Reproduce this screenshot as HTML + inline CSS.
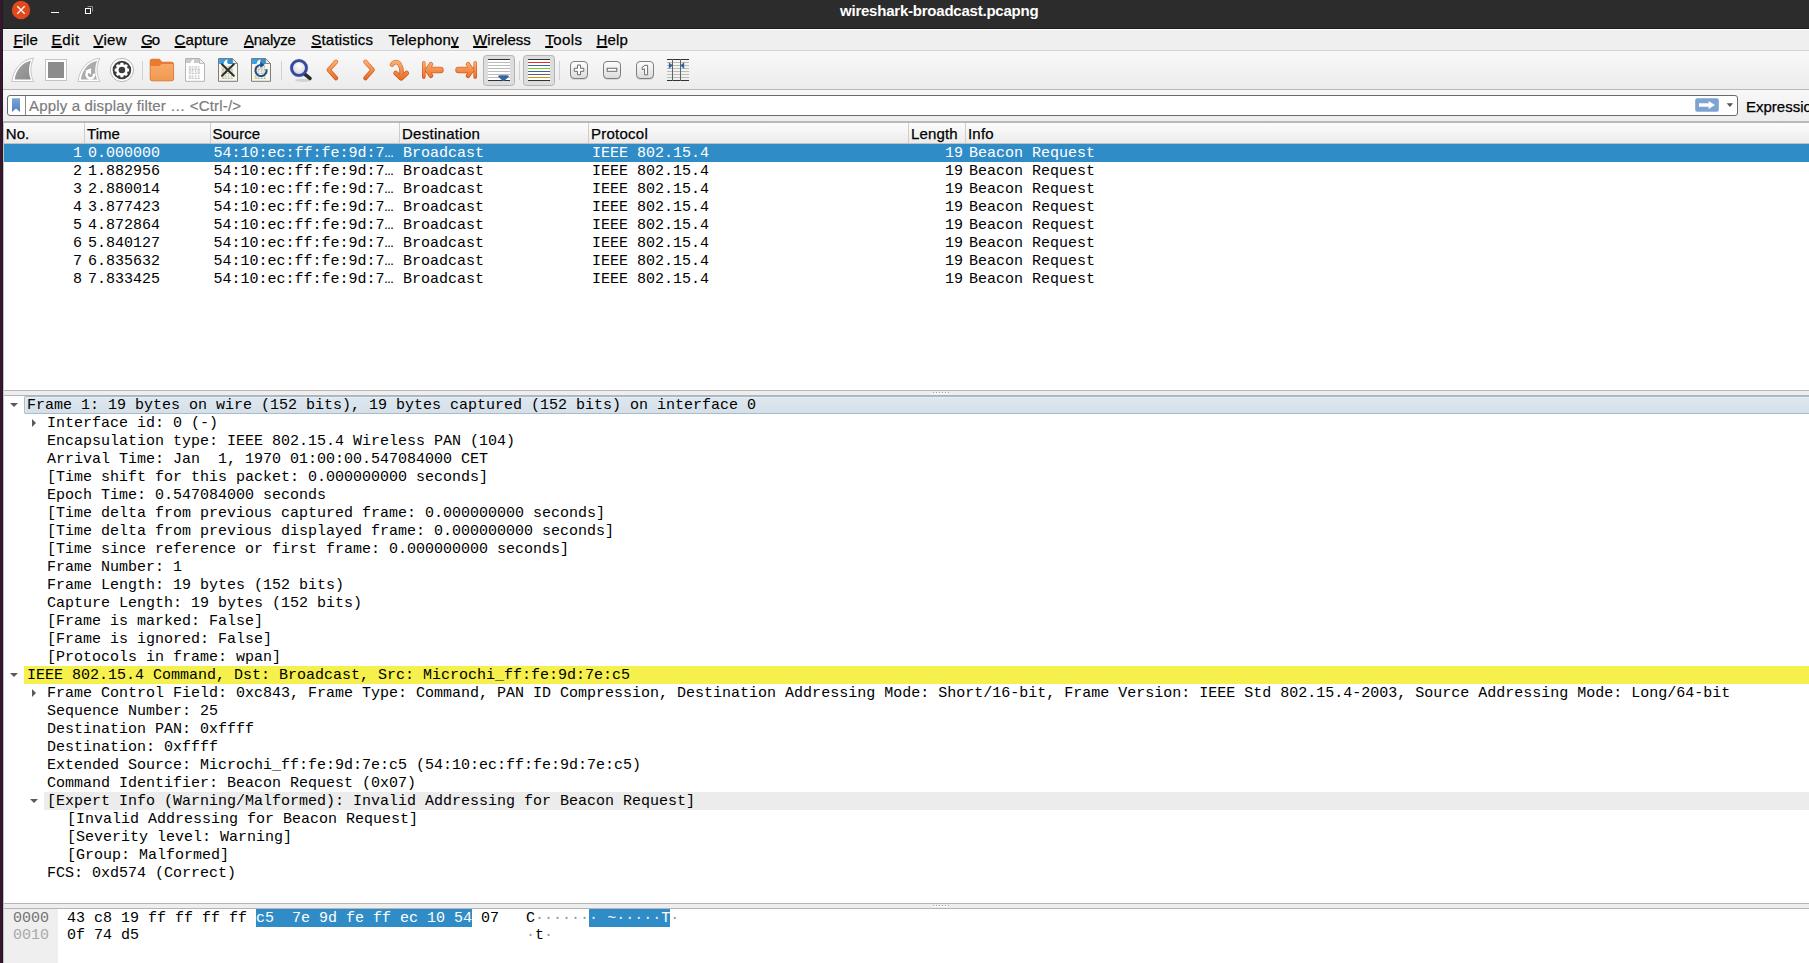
<!DOCTYPE html>
<html lang="en">
<head>
<meta charset="utf-8">
<title>wireshark-broadcast.pcapng</title>
<style>
html,body{margin:0;padding:0;}
body{width:1809px;height:963px;overflow:hidden;position:relative;background:#fff;
 font-family:"Liberation Sans","DejaVu Sans",sans-serif;font-size:15px;color:#000;}
.abs{position:absolute;}
#strip{left:0;top:0;width:2px;height:963px;background:#391530;border-right:1px solid #1d1d1d;}
#title{left:0;top:0;width:1809px;height:28px;background:#2c2c2c;border-bottom:1px solid #1c1c1c;}
#title span{position:absolute;top:1px;color:#fff;font-weight:bold;font-size:15px;line-height:20px;white-space:nowrap;}
#menubar{left:3px;top:29px;width:1806px;height:20px;background:#efefef;border-top:1px solid #fdfdfd;border-bottom:1px solid #d4d4d4;}
#menubar span{-webkit-text-stroke:0.25px #000;position:absolute;top:0px;line-height:20px;font-size:15px;color:#000;white-space:nowrap;margin-left:-3px;}
#menubar u{text-decoration-skip-ink:none;text-decoration:underline;text-decoration-thickness:2px;text-underline-offset:1px;}
#toolbar{left:3px;top:51px;width:1806px;height:38px;background:linear-gradient(#f9f9f9,#ececec);border-bottom:1px solid #b9b9b9;}
#filterbar{left:3px;top:90px;width:1806px;height:31px;background:linear-gradient(#f8f8f8,#f6f6f6 20%,#efefef 80%,#eeeeee);}
#finput{left:7px;top:95px;width:1729px;height:19px;background:#fff;border:1px solid #6a6a6a;border-radius:3px;}
#finput .ph{-webkit-text-stroke:0.2px #7c7c7c;position:absolute;left:21px;top:0;line-height:20px;font-size:15px;color:#7c7c7c;white-space:nowrap;}
#finput .div{position:absolute;left:17px;top:0;width:1px;height:19px;background:#8a8a8a;}
#expr{-webkit-text-stroke:0.25px #000;left:1746px;top:97px;font-size:15px;line-height:20px;white-space:nowrap;}
#fline{left:3px;top:121px;width:1806px;height:2px;background:#b9b9b9;}
#phead{left:3px;top:123px;width:1806px;height:20px;background:linear-gradient(#fcfcfc,#f5f5f5 45%,#ebebeb);border-bottom:1px solid #c4c2c0;}
#phead span{-webkit-text-stroke:0.25px #000;position:absolute;top:1px;line-height:20px;font-size:15px;white-space:nowrap;}
#phead i{position:absolute;top:0;width:1px;height:20px;background:#cdcdcd;}
.mono{font-family:"Liberation Mono","DejaVu Sans Mono",monospace;font-size:15px;white-space:pre;}
.prow{position:absolute;left:3px;width:1806px;height:18px;line-height:18px;}
.prow span{position:absolute;top:1px;}
.prow.sel{background:#308cc6;color:#fff;}
.split{left:3px;width:1806px;height:6px;background:#eeeeee;border-top:1px solid #b5b5b5;border-bottom:1px solid #b5b5b5;box-sizing:border-box;}
.split b{position:absolute;left:930px;top:1px;width:16px;height:1px;background:repeating-linear-gradient(90deg,#a2a2a2 0 1px,transparent 1px 3px);box-shadow:0 1px 0 #fbfbfb;}
#details{left:3px;top:396px;width:1806px;height:507px;overflow:hidden;}
.drow{position:absolute;left:0;width:1806px;height:18px;line-height:18px;}
.drow span{position:absolute;top:1px;}
.drow .ar{position:absolute;}
.drow .bg{position:absolute;top:0;right:0;height:18px;}
.bg.selrow{background:linear-gradient(#dee7ef,#d5dfe8);box-shadow:inset 1px 1px 0 #e6eef5;border:1px solid #a8bccf;border-right:0;box-sizing:border-box;border-radius:2px 0 0 2px;}
.bg.yel{background:#f5f04c;}
.bg.gry{background:#ececec;}
#bytes{left:3px;top:909px;width:1806px;height:54px;background:#fff;}
#bytes .off{position:absolute;left:0;top:0;width:55px;height:54px;background:#efefef;}
#bytes .hl{position:absolute;height:18px;background:#308cc6;}
.brow{position:absolute;left:0;width:1806px;height:17px;line-height:18px;}
.brow span{position:absolute;top:1px;}
.brow em{font-style:normal;color:#fff;}
.brow s{text-decoration:none;color:#9a9a9a;}
.brow em s{color:#e4eef7;}
.o1{color:#737373;}
.o2{color:#a9a9a9;}
#edge{left:3px;top:123px;width:1px;height:840px;background:#c3c3c3;}

</style>
</head>
<body>
<div id="title" class="abs"><span id="ttl" style="left:840px;letter-spacing:-0.225px;">wireshark-broadcast.pcapng</span></div>
<div id="strip" class="abs"></div>
<svg class="abs" style="left:0;top:0" width="110" height="28" viewBox="0 0 110 28">
<circle cx="21" cy="10" r="9.2" fill="#e0491c"/>
<path d="M17.3 6.3 L24.7 13.7 M24.7 6.3 L17.3 13.7" stroke="#fff" stroke-width="1.3" fill="none"/>
<rect x="51" y="12" width="8" height="1" fill="#fff"/>
<rect x="85.5" y="8.5" width="5" height="5" fill="none" stroke="#fff" stroke-width="1"/>
<path d="M87.5 6.5 H92.5 V11.5" fill="none" stroke="#8c8c8c" stroke-width="1"/>
</svg>
<div id="menubar" class="abs"><span id="m0" style="left:13.5px;letter-spacing:0.038px;"><u>F</u>ile</span><span id="m1" style="left:51.5px;letter-spacing:0.614px;"><u>E</u>dit</span><span id="m2" style="left:93.4px;letter-spacing:0.317px;"><u>V</u>iew</span><span id="m3" style="left:141.2px;letter-spacing:-1.216px;"><u>G</u>o</span><span id="m4" style="left:174.6px;letter-spacing:0.068px;"><u>C</u>apture</span><span id="m5" style="left:243.9px;letter-spacing:-0.229px;"><u>A</u>nalyze</span><span id="m6" style="left:311.3px;letter-spacing:0.185px;"><u>S</u>tatistics</span><span id="m7" style="left:388.6px;letter-spacing:0.201px;">Telephon<u>y</u></span><span id="m8" style="left:473.1px;letter-spacing:0.024px;"><u>W</u>ireless</span><span id="m9" style="left:545.2px;letter-spacing:0.442px;"><u>T</u>ools</span><span id="m10" style="left:596.5px;letter-spacing:0.142px;"><u>H</u>elp</span></div>
<div id="toolbar" class="abs"></div>
<svg id="tbicons" class="abs" style="left:0;top:51px" width="700" height="38" viewBox="0 51 700 38">
<defs>
<linearGradient id="gFin" x1="0" y1="0" x2="1" y2="1"><stop offset="0" stop-color="#a6a6a6"/><stop offset="1" stop-color="#8a8a8a"/></linearGradient>
<linearGradient id="gOr" gradientUnits="userSpaceOnUse" x1="0" y1="60" x2="0" y2="80"><stop offset="0" stop-color="#f8b67a"/><stop offset="1" stop-color="#ec6a22"/></linearGradient>
<linearGradient id="gOrD" gradientUnits="userSpaceOnUse" x1="0" y1="60" x2="0" y2="80"><stop offset="0" stop-color="#e27c3a"/><stop offset="1" stop-color="#c94a14"/></linearGradient>
<linearGradient id="gFold" x1="0" y1="0" x2="0" y2="1"><stop offset="0" stop-color="#f6a968"/><stop offset="1" stop-color="#f19a50"/></linearGradient>
<linearGradient id="gBtn" x1="0" y1="0" x2="0" y2="1"><stop offset="0" stop-color="#ffffff"/><stop offset="1" stop-color="#dadada"/></linearGradient>
<linearGradient id="gHdr" x1="0" y1="0" x2="1" y2="0"><stop offset="0" stop-color="#3fa4e6"/><stop offset="1" stop-color="#1f8ad6"/></linearGradient>
<radialGradient id="gLens" cx="0.5" cy="0.35" r="0.7"><stop offset="0" stop-color="#ffffff"/><stop offset="1" stop-color="#cfcfcf"/></radialGradient>
</defs>
<!-- 1 shark fin (start capture, disabled) -->
<path d="M33.7 58.1 C21 59.6 13.2 69.5 11.9 81.5 H33.7 C30.2 74.5 29.6 66.5 33.7 58.1Z" fill="#fff" stroke="#c6c6c6" stroke-width="1"/>
<path d="M31 60.7 C22 62.4 16 70 14.7 79.5 H30.9 C28.5 73.5 28.3 67 31 60.7Z" fill="url(#gFin)"/>
<!-- 2 stop -->
<rect x="45.5" y="59.5" width="21" height="21" fill="#fff" stroke="#c4c4c4"/>
<rect x="48" y="62" width="16" height="16" fill="#8c8c8c"/>
<!-- 3 restart fin -->
<path d="M99.9 58.1 C87.2 59.6 79.4 69.5 78.1 81.5 H99.9 C96.4 74.5 95.8 66.5 99.9 58.1Z" fill="#fff" stroke="#c6c6c6" stroke-width="1"/>
<path d="M97.2 60.7 C88.2 62.4 82.2 70 80.9 79.5 H97.1 C94.7 73.5 94.5 67 97.2 60.7Z" fill="#ababab"/>
<path d="M94 73.6 A3.8 3.8 0 1 1 88.7 71.2" fill="none" stroke="#fff" stroke-width="2.5"/>
<path d="M85.1 70.8 L91.1 68.2 L90.9 74.4 Z" fill="#fff"/>
<!-- 4 gear / options -->
<circle cx="121.9" cy="70" r="11.6" fill="#fff" stroke="#b5b5b5" stroke-width="1"/>
<circle cx="121.9" cy="70" r="9.3" fill="#3b3b3b"/>
<g fill="#fff" transform="translate(121.9 70)">
<circle r="5.9"/>
<g id="teeth"><rect x="-1.5" y="-7.2" width="3" height="14.4" rx="0.5"/><rect x="-7.2" y="-1.5" width="14.4" height="3" rx="0.5"/></g>
<g transform="rotate(45)"><rect x="-1.5" y="-7.2" width="3" height="14.4" rx="0.5"/><rect x="-7.2" y="-1.5" width="14.4" height="3" rx="0.5"/></g>
</g>
<circle cx="121.9" cy="70" r="3.3" fill="#3b3b3b"/>
<!-- sep -->
<rect x="142" y="61" width="1" height="19" fill="#d2d2d2"/>
<!-- 5 folder -->
<path d="M152 59.2 H158.6 Q160 59.2 160.7 60.5 L161.4 62.2 H171.6 Q173.6 62.2 173.6 64.2 V78.8 Q173.6 80.8 171.6 80.8 H152.2 Q150.2 80.8 150.2 78.8 V61 Q150.2 59.2 152 59.2Z" fill="#ed7a2c" stroke="#cf6a2c" stroke-width="0.8"/>
<path d="M150.6 66 H158.6 Q159.6 66 160.2 65.2 L160.8 64.4 Q161.3 63.9 162.2 63.9 H173.2 V78.8 Q173.2 80.4 171.6 80.4 H152.2 Q150.6 80.4 150.6 78.8Z" fill="url(#gFold)"/>
<!-- 6 file (disabled save) -->
<path d="M185.5 58.5 H199.5 L204.5 63.5 V81.3 H185.5Z" fill="#fff" stroke="#b4b4b4"/>
<path d="M186 59 H199.3 L203 62.8 V63 H186Z" fill="#c9c9c9"/>
<path d="M199.5 58.5 V63.5 H204.5Z" fill="#ececec" stroke="#b4b4b4" stroke-width="0.8"/>
<path d="M190.5 63 Q191 60 194 59 V63Z" fill="#fff"/>
<g font-family="Liberation Mono, monospace" font-size="4.6" fill="#a6a6a6" letter-spacing="0.2"><text x="188.4" y="69.8">0101</text><text x="188.4" y="74.3">0110</text><text x="188.4" y="78.8">0111</text></g>
<!-- 7 close file -->
<path d="M218.5 58.5 H232.5 L237.5 63.5 V81.3 H218.5Z" fill="#f8f8e8" stroke="#7c7c7c"/>
<path d="M219 59 H232.3 L236 62.8 V64 H219Z" fill="url(#gHdr)"/>
<path d="M232.5 58.5 V63.5 H237.5Z" fill="#ececec" stroke="#7c7c7c" stroke-width="0.8"/>
<path d="M223.5 64 Q224 60.5 227.5 59.2 Q226.5 62 228 64Z" fill="#fff"/>
<g font-family="Liberation Mono, monospace" font-size="4.6" fill="#9a9a8e" letter-spacing="0.2"><text x="221.4" y="69.8">0101</text><text x="221.4" y="74.3">0110</text><text x="221.4" y="78.8">0111</text></g>
<path d="M222 64.3 L233.8 75.7 M233.8 64.3 L222 75.7" stroke="#303030" stroke-width="2.05" stroke-linecap="round"/>
<!-- 8 reload -->
<path d="M251.5 58.5 H265.5 L270.5 63.5 V81.3 H251.5Z" fill="#f8f8e8" stroke="#7c7c7c"/>
<path d="M252 59 H265.3 L269 62.8 V64 H252Z" fill="url(#gHdr)"/>
<path d="M265.5 58.5 V63.5 H270.5Z" fill="#ececec" stroke="#7c7c7c" stroke-width="0.8"/>
<path d="M256.5 64 Q257 60.5 260.5 59.2 Q259.5 62 261 64Z" fill="#fff"/>
<g font-family="Liberation Mono, monospace" font-size="4.6" fill="#9a9a8e" letter-spacing="0.2"><text x="254.4" y="69.8">0101</text><text x="254.4" y="74.3">0110</text><text x="254.4" y="78.8">0111</text></g>
<path d="M266.5 69.2 A5.6 5.6 0 1 1 260.6 64.9" fill="none" stroke="#1f4b92" stroke-width="1.95"/>
<path d="M260.2 62 L264.9 64.9 L260.2 67.8Z" fill="#1f4b92"/>
<!-- sep -->
<rect x="281" y="61" width="1" height="19" fill="#d2d2d2"/>
<!-- 9 find -->
<ellipse cx="303" cy="80.3" rx="8" ry="1.6" fill="#000" opacity="0.12"/>
<path d="M304.4 73.8 L310 78.4" stroke="#2a2a2a" stroke-width="3.6" stroke-linecap="round"/>
<circle cx="299" cy="68" r="7.4" fill="url(#gLens)" stroke="#344aa2" stroke-width="2.8"/>
<circle cx="299" cy="68" r="8.8" fill="none" stroke="#2a3f8f" stroke-width="0.5" opacity="0.7"/>
<!-- 10,11 chevrons -->
<path d="M336 61.7 L328.7 69.9 L336 78.2" fill="none" stroke="url(#gOrD)" stroke-width="4.3" stroke-linecap="round" stroke-linejoin="round"/>
<path d="M336 61.7 L328.7 69.9 L336 78.2" fill="none" stroke="url(#gOr)" stroke-width="2.8" stroke-linecap="round" stroke-linejoin="round"/>
<path d="M365.4 61.7 L372.7 69.9 L365.4 78.2" fill="none" stroke="url(#gOrD)" stroke-width="4.3" stroke-linecap="round" stroke-linejoin="round"/>
<path d="M365.4 61.7 L372.7 69.9 L365.4 78.2" fill="none" stroke="url(#gOr)" stroke-width="2.8" stroke-linecap="round" stroke-linejoin="round"/>
<!-- 12 go to packet -->
<g fill="none" stroke-linecap="round" stroke-linejoin="round">
<path d="M392 64.6 C394.8 60 402.8 60.6 401.4 76.6" stroke="url(#gOrD)" stroke-width="4.6"/>
<path d="M395.6 73 L401.2 78.4 L406.8 73" stroke="url(#gOrD)" stroke-width="4.6"/>
<path d="M392 64.6 C394.8 60 402.8 60.6 401.4 76.6" stroke="url(#gOr)" stroke-width="3.1"/>
<path d="M395.6 73 L401.2 78.4 L406.8 73" stroke="url(#gOr)" stroke-width="3.1"/>
</g>
<!-- 13 first -->
<g fill="none" stroke-linecap="round" stroke-linejoin="round">
<path d="M423.8 62.9 V77.1" stroke="url(#gOrD)" stroke-width="3.6"/>
<path d="M428 70 H440.5" stroke="url(#gOrD)" stroke-width="6.4"/>
<path d="M431 64.3 L427 70 L431 75.7" stroke="url(#gOrD)" stroke-width="4.6"/>
<path d="M423.8 62.9 V77.1" stroke="url(#gOr)" stroke-width="2.1"/>
<path d="M428 70 H440.5" stroke="url(#gOr)" stroke-width="4.9"/>
<path d="M431 64.3 L427 70 L431 75.7" stroke="url(#gOr)" stroke-width="3.1"/>
<!-- 14 last -->
<path d="M475.2 62.9 V77.1" stroke="url(#gOrD)" stroke-width="3.6"/>
<path d="M471 70 H458.5" stroke="url(#gOrD)" stroke-width="6.4"/>
<path d="M468 64.3 L472 70 L468 75.7" stroke="url(#gOrD)" stroke-width="4.6"/>
<path d="M475.2 62.9 V77.1" stroke="url(#gOr)" stroke-width="2.1"/>
<path d="M471 70 H458.5" stroke="url(#gOr)" stroke-width="4.9"/>
<path d="M468 64.3 L472 70 L468 75.7" stroke="url(#gOr)" stroke-width="3.1"/>
</g>
<!-- 15 autoscroll (checked) -->
<rect x="483.5" y="55.5" width="31" height="30" rx="3" fill="#dddddd" stroke="#b3b3b3"/>
<rect x="488" y="59" width="22" height="22" fill="#fff"/>
<g fill="#babdb6"><rect x="488" y="62" width="22" height="1"/><rect x="488" y="65" width="22" height="1"/><rect x="488" y="68" width="22" height="1"/><rect x="488" y="71" width="22" height="1"/><rect x="488" y="74" width="22" height="1"/><rect x="488" y="77" width="22" height="1"/></g>
<rect x="488" y="59" width="22" height="1" fill="#2e3436"/><rect x="488" y="80" width="22" height="1" fill="#2e3436"/>
<path d="M498 76.4 Q498.6 75.2 500 75.2 H507 Q508.6 75.2 509 76.4 L504.2 80.9 H502.8Z" fill="#3465a4"/>
<!-- sep -->
<rect x="519" y="61" width="1" height="19" fill="#d2d2d2"/>
<!-- 16 colorize (checked) -->
<rect x="523.5" y="55.5" width="31" height="30" rx="3" fill="#dddddd" stroke="#b3b3b3"/>
<rect x="528" y="59" width="22" height="22" fill="#fff"/>
<rect x="528" y="59" width="22" height="1" fill="#2e3436"/>
<rect x="528" y="62" width="22" height="1" fill="#ef2929"/>
<rect x="528" y="65" width="22" height="1" fill="#3465a4"/>
<rect x="528" y="68" width="22" height="1" fill="#73d216"/>
<rect x="528" y="71" width="22" height="1" fill="#3465a4"/>
<rect x="528" y="74" width="22" height="1" fill="#75507b"/>
<rect x="528" y="77" width="22" height="1" fill="#c4a000"/>
<rect x="528" y="80" width="22" height="1" fill="#2e3436"/>
<!-- sep -->
<rect x="559" y="61" width="1" height="19" fill="#d2d2d2"/>
<!-- 17-19 zoom buttons -->
<g>
<rect x="570.5" y="62.4" width="17" height="17" rx="3.6" fill="#000" opacity="0.2"/>
<rect x="570.5" y="61.5" width="17" height="17" rx="3.6" fill="url(#gBtn)" stroke="#7e7e7e"/>
<path d="M577.5 65 H580.5 V68.3 H583.8 V71.3 H580.5 V74.7 H577.5 V71.3 H574.2 V68.3 H577.5Z" fill="#fff" stroke="#6c6c6c" stroke-width="1"/>
<rect x="603.5" y="62.4" width="17" height="17" rx="3.6" fill="#000" opacity="0.2"/>
<rect x="603.5" y="61.5" width="17" height="17" rx="3.6" fill="url(#gBtn)" stroke="#7e7e7e"/>
<rect x="607.2" y="68.3" width="9.6" height="3" fill="#fff" stroke="#6c6c6c" stroke-width="1"/>
<rect x="636.5" y="62.4" width="17" height="17" rx="3.6" fill="#000" opacity="0.2"/>
<rect x="636.5" y="61.5" width="17" height="17" rx="3.6" fill="url(#gBtn)" stroke="#7e7e7e"/>
<path d="M645 65.3 H647.6 V74.8 H644.6 V68.8 L642.2 69.6 V67.2 Z" fill="#fff" stroke="#6c6c6c" stroke-width="1"/>
</g>
<!-- 20 resize columns -->
<g fill="#babdb6"><rect x="667" y="62" width="22" height="1"/><rect x="667" y="65" width="22" height="1"/><rect x="667" y="68" width="22" height="1"/><rect x="667" y="71" width="22" height="1"/><rect x="667" y="74" width="22" height="1"/><rect x="667" y="77" width="22" height="1"/></g>
<rect x="667" y="59" width="22" height="1" fill="#2e3436"/><rect x="667" y="80" width="22" height="1" fill="#2e3436"/>
<rect x="672" y="59" width="1" height="22" fill="#60625e"/><rect x="680" y="59" width="1" height="22" fill="#60625e"/>
<path d="M668.8 62.2 L672.9 65.5 L668.8 68.8Z" fill="#3465a4"/><path d="M684.2 62.2 L680.1 65.5 L684.2 68.8Z" fill="#3465a4"/>
</svg>
<div id="filterbar" class="abs"></div>
<div id="finput" class="abs"><div class="div"></div><span id="ph" class="ph" style="letter-spacing:0.164px;">Apply a display filter … &lt;Ctrl-/&gt;</span></div>
<svg class="abs" style="left:8px;top:96px" width="18" height="20" viewBox="0 0 18 20">
<defs><linearGradient id="bk" x1="0" y1="0" x2="0" y2="1"><stop offset="0" stop-color="#7fa6d6"/><stop offset="1" stop-color="#4f7fbf"/></linearGradient></defs>
<path d="M4 2.2 H12 V16 L8 12.6 L4 16 Z" fill="url(#bk)"/></svg>
<svg class="abs" style="left:1690px;top:96px" width="48" height="20" viewBox="0 0 48 20">
<rect x="5.2" y="2.2" width="23.6" height="13.6" rx="2" fill="#7da3d3"/>
<path d="M9 7.3 H18.6 V4.9 L25 9 L18.6 13.1 V10.7 H9 Z" fill="#fff"/>
<path d="M36.7 7.2 H43.1 L39.9 10.9 Z" fill="#555"/>
</svg>
<span id="expr" class="abs" style="">Expression…</span>
<div id="fline" class="abs"></div>
<div id="phead" class="abs"><span id="h0" style="left:2.8px;">No.</span><i style="left:81px"></i><span id="h1" style="left:84.1px;">Time</span><i style="left:207px"></i><span id="h2" style="left:209.5px;">Source</span><i style="left:396px"></i><span id="h3" style="left:398.9px;letter-spacing:0.295px;">Destination</span><i style="left:585px"></i><span id="h4" style="left:587.9px;letter-spacing:0.267px;">Protocol</span><i style="left:905px"></i><span id="h5" style="left:907.9px;letter-spacing:0.162px;">Length</span><i style="left:962px"></i><span id="h6" style="left:964.9px;letter-spacing:0.256px;">Info</span></div>
<div class="prow mono sel" style="top:144px"><span style="right:1727px">1</span><span style="left:85px">0.000000</span><span style="left:210.5px">54:10:ec:ff:fe:9d:7…</span><span style="left:400px">Broadcast</span><span style="left:589px">IEEE 802.15.4</span><span style="right:846px">19</span><span style="left:966px">Beacon Request</span></div>
<div class="prow mono" style="top:162px"><span style="right:1727px">2</span><span style="left:85px">1.882956</span><span style="left:210.5px">54:10:ec:ff:fe:9d:7…</span><span style="left:400px">Broadcast</span><span style="left:589px">IEEE 802.15.4</span><span style="right:846px">19</span><span style="left:966px">Beacon Request</span></div>
<div class="prow mono" style="top:180px"><span style="right:1727px">3</span><span style="left:85px">2.880014</span><span style="left:210.5px">54:10:ec:ff:fe:9d:7…</span><span style="left:400px">Broadcast</span><span style="left:589px">IEEE 802.15.4</span><span style="right:846px">19</span><span style="left:966px">Beacon Request</span></div>
<div class="prow mono" style="top:198px"><span style="right:1727px">4</span><span style="left:85px">3.877423</span><span style="left:210.5px">54:10:ec:ff:fe:9d:7…</span><span style="left:400px">Broadcast</span><span style="left:589px">IEEE 802.15.4</span><span style="right:846px">19</span><span style="left:966px">Beacon Request</span></div>
<div class="prow mono" style="top:216px"><span style="right:1727px">5</span><span style="left:85px">4.872864</span><span style="left:210.5px">54:10:ec:ff:fe:9d:7…</span><span style="left:400px">Broadcast</span><span style="left:589px">IEEE 802.15.4</span><span style="right:846px">19</span><span style="left:966px">Beacon Request</span></div>
<div class="prow mono" style="top:234px"><span style="right:1727px">6</span><span style="left:85px">5.840127</span><span style="left:210.5px">54:10:ec:ff:fe:9d:7…</span><span style="left:400px">Broadcast</span><span style="left:589px">IEEE 802.15.4</span><span style="right:846px">19</span><span style="left:966px">Beacon Request</span></div>
<div class="prow mono" style="top:252px"><span style="right:1727px">7</span><span style="left:85px">6.835632</span><span style="left:210.5px">54:10:ec:ff:fe:9d:7…</span><span style="left:400px">Broadcast</span><span style="left:589px">IEEE 802.15.4</span><span style="right:846px">19</span><span style="left:966px">Beacon Request</span></div>
<div class="prow mono" style="top:270px"><span style="right:1727px">8</span><span style="left:85px">7.833425</span><span style="left:210.5px">54:10:ec:ff:fe:9d:7…</span><span style="left:400px">Broadcast</span><span style="left:589px">IEEE 802.15.4</span><span style="right:846px">19</span><span style="left:966px">Beacon Request</span></div>
<div class="split abs" style="top:390px"><b></b></div>
<div id="details" class="abs mono">
<div class="drow" style="top:0px"><div class="bg selrow" style="left:21px"></div><svg class="ar" style="left:7px;top:7px" width="8" height="4" viewBox="0 0 8 4"><path d="M0 0H8L4 4Z" fill="#5a5a5a"/></svg><span style="left:24px">Frame 1: 19 bytes on wire (152 bits), 19 bytes captured (152 bits) on interface 0</span></div>
<div class="drow" style="top:18px"><svg class="ar" style="left:29px;top:5px" width="4" height="8" viewBox="0 0 4 8"><path d="M0 0V8L4 4Z" fill="#5a5a5a"/></svg><span style="left:44px">Interface id: 0 (-)</span></div>
<div class="drow" style="top:36px"><span style="left:44px">Encapsulation type: IEEE 802.15.4 Wireless PAN (104)</span></div>
<div class="drow" style="top:54px"><span style="left:44px">Arrival Time: Jan  1, 1970 01:00:00.547084000 CET</span></div>
<div class="drow" style="top:72px"><span style="left:44px">[Time shift for this packet: 0.000000000 seconds]</span></div>
<div class="drow" style="top:90px"><span style="left:44px">Epoch Time: 0.547084000 seconds</span></div>
<div class="drow" style="top:108px"><span style="left:44px">[Time delta from previous captured frame: 0.000000000 seconds]</span></div>
<div class="drow" style="top:126px"><span style="left:44px">[Time delta from previous displayed frame: 0.000000000 seconds]</span></div>
<div class="drow" style="top:144px"><span style="left:44px">[Time since reference or first frame: 0.000000000 seconds]</span></div>
<div class="drow" style="top:162px"><span style="left:44px">Frame Number: 1</span></div>
<div class="drow" style="top:180px"><span style="left:44px">Frame Length: 19 bytes (152 bits)</span></div>
<div class="drow" style="top:198px"><span style="left:44px">Capture Length: 19 bytes (152 bits)</span></div>
<div class="drow" style="top:216px"><span style="left:44px">[Frame is marked: False]</span></div>
<div class="drow" style="top:234px"><span style="left:44px">[Frame is ignored: False]</span></div>
<div class="drow" style="top:252px"><span style="left:44px">[Protocols in frame: wpan]</span></div>
<div class="drow" style="top:270px"><div class="bg yel" style="left:21px"></div><svg class="ar" style="left:7px;top:7px" width="8" height="4" viewBox="0 0 8 4"><path d="M0 0H8L4 4Z" fill="#5a5a5a"/></svg><span style="left:24px">IEEE 802.15.4 Command, Dst: Broadcast, Src: Microchi_ff:fe:9d:7e:c5</span></div>
<div class="drow" style="top:288px"><svg class="ar" style="left:29px;top:5px" width="4" height="8" viewBox="0 0 4 8"><path d="M0 0V8L4 4Z" fill="#5a5a5a"/></svg><span style="left:44px">Frame Control Field: 0xc843, Frame Type: Command, PAN ID Compression, Destination Addressing Mode: Short/16-bit, Frame Version: IEEE Std 802.15.4-2003, Source Addressing Mode: Long/64-bit</span></div>
<div class="drow" style="top:306px"><span style="left:44px">Sequence Number: 25</span></div>
<div class="drow" style="top:324px"><span style="left:44px">Destination PAN: 0xffff</span></div>
<div class="drow" style="top:342px"><span style="left:44px">Destination: 0xffff</span></div>
<div class="drow" style="top:360px"><span style="left:44px">Extended Source: Microchi_ff:fe:9d:7e:c5 (54:10:ec:ff:fe:9d:7e:c5)</span></div>
<div class="drow" style="top:378px"><span style="left:44px">Command Identifier: Beacon Request (0x07)</span></div>
<div class="drow" style="top:396px"><div class="bg gry" style="left:41px"></div><svg class="ar" style="left:27px;top:7px" width="8" height="4" viewBox="0 0 8 4"><path d="M0 0H8L4 4Z" fill="#5a5a5a"/></svg><span style="left:44px">[Expert Info (Warning/Malformed): Invalid Addressing for Beacon Request]</span></div>
<div class="drow" style="top:414px"><span style="left:64px">[Invalid Addressing for Beacon Request]</span></div>
<div class="drow" style="top:432px"><span style="left:64px">[Severity level: Warning]</span></div>
<div class="drow" style="top:450px"><span style="left:64px">[Group: Malformed]</span></div>
<div class="drow" style="top:468px"><span style="left:44px">FCS: 0xd574 (Correct)</span></div>
</div>
<div class="split abs" style="top:903px"><b></b></div>
<div id="bytes" class="abs mono"><div class="off"></div><div class="hl" style="left:253px;top:0;width:216px"></div><div class="hl" style="left:586px;top:0;width:81px"></div><div class="brow" style="top:0"><span class="o1" style="left:10px">0000</span><span style="left:64px">43 c8 19 ff ff ff ff <em>c5  7e 9d fe ff ec 10 54</em> 07</span><span style="left:523px">C<s>·</s><s>·</s><s>·</s><s>·</s><s>·</s><s>·</s><em><s>·</s> ~<s>·</s><s>·</s><s>·</s><s>·</s><s>·</s>T</em><s>·</s></span></div><div class="brow" style="top:17px"><span class="o2" style="left:10px">0010</span><span style="left:64px">0f 74 d5</span><span style="left:523px"><s>·</s>t<s>·</s></span></div></div>
<div id="edge" class="abs"></div>
</body>
</html>
